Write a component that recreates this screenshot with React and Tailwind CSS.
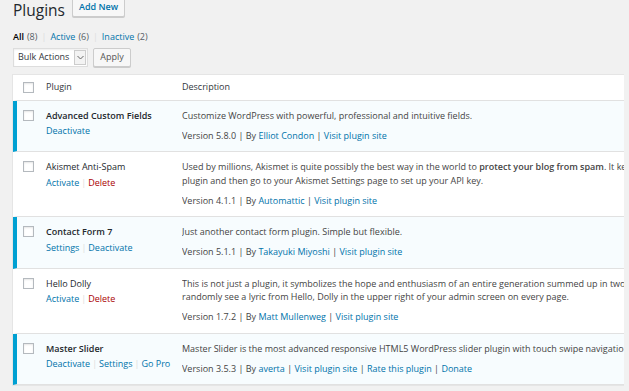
import React from 'react';

const plugins = [
  {
    name: 'Advanced Custom Fields',
    active: true,
    actions: [{ label: 'Deactivate' }],
    desc: ['Customize WordPress with powerful, professional and intuitive fields.'],
    version: '5.8.0',
    author: 'Elliot Condon',
    links: ['Visit plugin site'],
  },
  {
    name: 'Akismet Anti-Spam',
    active: false,
    actions: [{ label: 'Activate' }, { label: 'Delete', danger: true }],
    desc: [
      <>Used by millions, Akismet is quite possibly the best way in the world to <strong className="font-semibold">protect your blog from spam</strong>. It keeps your site protected even while you sleep. To get started: activate the Akismet</>,
      'plugin and then go to your Akismet Settings page to set up your API key.',
    ],
    version: '4.1.1',
    author: 'Automattic',
    links: ['Visit plugin site'],
  },
  {
    name: 'Contact Form 7',
    active: true,
    actions: [{ label: 'Settings' }, { label: 'Deactivate' }],
    desc: ['Just another contact form plugin. Simple but flexible.'],
    version: '5.1.1',
    author: 'Takayuki Miyoshi',
    links: ['Visit plugin site'],
  },
  {
    name: 'Hello Dolly',
    active: false,
    actions: [{ label: 'Activate' }, { label: 'Delete', danger: true }],
    desc: [
      'This is not just a plugin, it symbolizes the hope and enthusiasm of an entire generation summed up in two words sung most famously by Louis Armstrong: Hello, Dolly. When activated you will',
      'randomly see a lyric from Hello, Dolly in the upper right of your admin screen on every page.',
    ],
    version: '1.7.2',
    author: 'Matt Mullenweg',
    links: ['Visit plugin site'],
  },
  {
    name: 'Master Slider',
    active: true,
    actions: [{ label: 'Deactivate' }, { label: 'Settings' }, { label: 'Go Pro' }],
    desc: ['Master Slider is the most advanced responsive HTML5 WordPress slider plugin with touch swipe navigation that works smoothly on devices too.'],
    version: '3.5.3',
    author: 'averta',
    links: ['Visit plugin site', 'Rate this plugin', 'Donate'],
  },
];

const Checkbox = () => (
  <span className="block w-[11px] h-[11px] bg-white border border-[#b4b9be] shadow-[inset_0_1px_2px_rgba(0,0,0,0.1)]" />
);

const PluginRow = ({ plugin }) => (
  <div
    className={`flex border-b border-[#e1e1e1] ${
      plugin.active ? 'bg-[#f7fcfe] border-l-[4px] border-l-[#00a0d2]' : 'bg-white border-l-[4px] border-l-white'
    }`}
  >
    <div className="w-[29px] shrink-0 pt-[9px] pl-[6px]">
      <Checkbox />
    </div>
    <div className="w-[136px] shrink-0 pt-2 pb-[9px]">
      <div className={`text-[#23282d] ${plugin.active ? 'font-semibold' : ''}`}>{plugin.name}</div>
      <div className="mt-[2px] flex items-center whitespace-nowrap">
        {plugin.actions.map((a, i) => (
          <React.Fragment key={a.label}>
            {i > 0 && <span className="text-[#ddd] px-[2px]">|</span>}
            <span className={a.danger ? 'text-[#a00]' : 'text-[#0073aa]'}>{a.label}</span>
          </React.Fragment>
        ))}
      </div>
    </div>
    <div className="flex-1 min-w-0 pt-2 pb-[9px] whitespace-nowrap overflow-hidden text-[#444]">
      {plugin.desc.map((d, i) => (
        <div key={i}>{d}</div>
      ))}
      <div className="mt-[6.5px]">
        Version {plugin.version} | By <span className="text-[#0073aa]">{plugin.author}</span>
        {plugin.links.map((l) => (
          <React.Fragment key={l}>
            {' '}| <span className="text-[#0073aa]">{l}</span>
          </React.Fragment>
        ))}
      </div>
    </div>
  </div>
);

export default function App() {
  return (
    <div className="w-[629px] h-[391px] overflow-hidden bg-[#f1f1f1] text-[9px] leading-[13.5px] text-[#444] font-['Open_Sans',sans-serif]">
      <div className="pl-[13px] flex items-start -mt-[3px]">
        <h1 className="text-[15.5px] leading-[21px] text-[#23282d] mt-[3px]">Plugins</h1>
        <button className="ml-[7px] h-[20px] px-[6px] bg-[#f7f7f7] border border-[#ccc] rounded-[2px] text-[#0073aa] font-semibold text-[9px] shadow-[0_1px_0_#ccc]">
          Add New
        </button>
      </div>
      <div className="pl-[13px] mt-[9px] flex items-center">
        <span className="font-semibold text-black">All</span>
        <span className="ml-[3px] text-[#555d66]">(8)</span>
        <span className="text-[#ddd] px-[4px]">|</span>
        <span className="text-[#0073aa]">Active</span>
        <span className="ml-[3px] text-[#555d66]">(6)</span>
        <span className="text-[#ddd] px-[4px]">|</span>
        <span className="text-[#0073aa]">Inactive</span>
        <span className="ml-[3px] text-[#555d66]">(2)</span>
      </div>
      <div className="pl-[13px] mt-[4px] flex items-center gap-[5px]">
        <div className="flex h-[19px] w-[75px] bg-white border border-[#ddd] shadow-[inset_0_1px_2px_rgba(0,0,0,0.07)]">
          <span className="flex-1 flex items-center pl-[4px] text-[#32373c]">Bulk Actions</span>
          <span className="w-[12px] my-[1px] mr-[1px] flex items-center justify-center border border-[#ccc] bg-[#f3f3f3]">
            <svg width="7" height="5" viewBox="0 0 7 5">
              <path d="M0.5 1 L3.5 4 L6.5 1" fill="none" stroke="#666" strokeWidth="1" />
            </svg>
          </span>
        </div>
        <button className="h-[19px] w-[38px] bg-[#f7f7f7] border border-[#ccc] rounded-[2px] text-[#555] shadow-[0_1px_0_#ccc]">
          Apply
        </button>
      </div>
      <div className="ml-[12px] mr-[5px] mt-[7px] border border-[#e5e5e5] border-r-0 bg-white">
        <div className="flex h-[26px] items-center border-b border-[#e1e1e1] border-l-[4px] border-l-white text-[#32373c]">
          <div className="w-[29px] shrink-0 pl-[6px]">
            <Checkbox />
          </div>
          <div className="w-[136px] shrink-0">Plugin</div>
          <div className="flex-1">Description</div>
        </div>
        {plugins.map((p) => (
          <PluginRow key={p.name} plugin={p} />
        ))}
      </div>
    </div>
  );
}
